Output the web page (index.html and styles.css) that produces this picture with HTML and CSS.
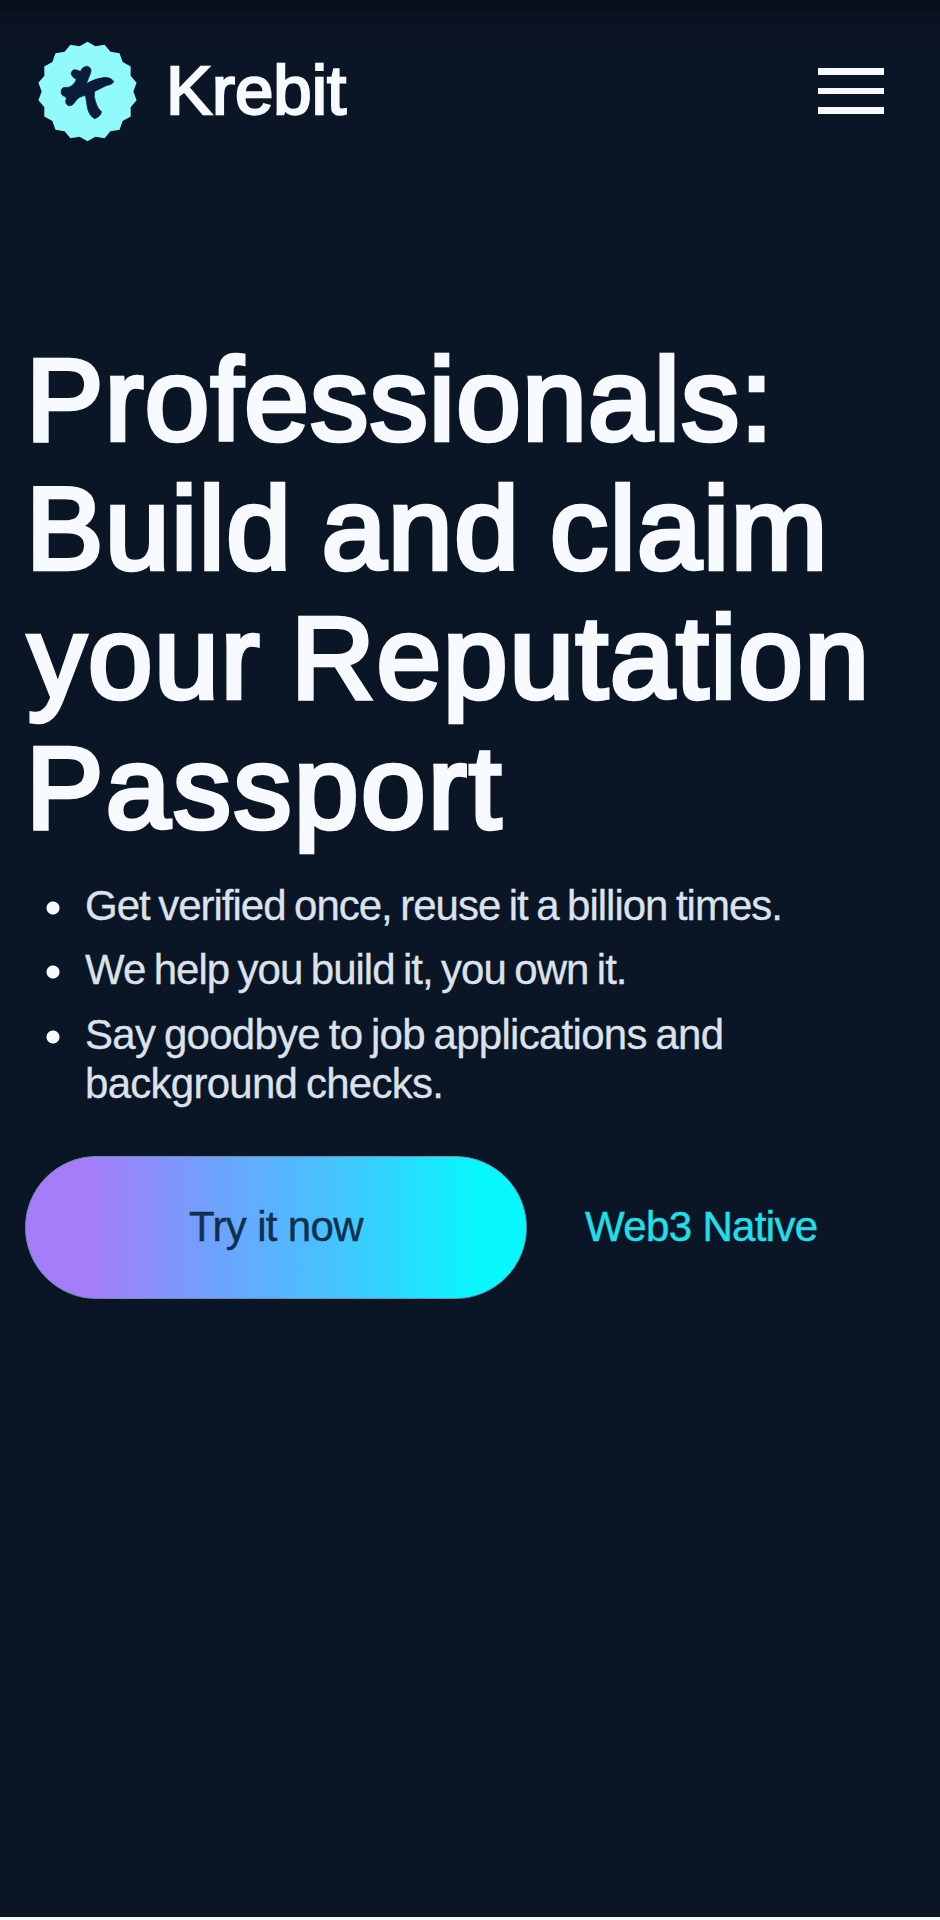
FILE: index.html
```html
<!DOCTYPE html>
<html lang="en">
<head>
<meta charset="utf-8">
<title>Krebit</title>
<link rel="stylesheet" href="styles.css">
</head>
<body>
<div class="page">
  <header class="header">
    <a class="brand">
      <svg class="brand-mark" viewBox="-50 -50 100 100" aria-hidden="true">
        <path class="badge" d="M0-49.2 7.8-44.8 16.9-46.4 22.7-39.4 31.7-37.8 34.8-29.2 42.8-24.7 42.7-15.5 48.6-8.6 45.4 0 48.6 8.6 42.7 15.5 42.8 24.7 34.8 29.2 31.7 37.8 22.7 39.4 16.9 46.4 7.8 44.8 0 49.2-7.8 44.8-16.9 46.4-22.7 39.4-31.7 37.8-34.8 29.2-42.8 24.7-42.7 15.5-48.6 8.6-45.4 0-48.6-8.6-42.7-15.5-42.8-24.7-34.8-29.2-31.7-37.8-22.7-39.4-16.9-46.4-7.8-44.8Z"/>
        <path class="rune" d="M-16-19Q-14-23-10-21L-7-20Q-5-25 0-25Q5-23 3-18L-1-8Q8-13 17-14Q23-14 26-10Q25-7 19-6L7 0Q6 5 8 10Q10 17 14 20Q13 25 7 27Q2 24 0 17L-2 4Q-9 5-12 10Q-15 15-19 14Q-23 12-21 7L-22 5Q-27 4-26-1Q-25-5-20-4Q-14-5-11-12Q-17-15-16-19Z"/>
      </svg>
      <span class="brand-name">Krebit</span>
    </a>
    <div class="menu" role="button" aria-label="Menu"><i></i><i></i><i></i></div>
  </header>
  <main class="hero">
    <h1 class="title">
      <span class="line">Professionals:</span>
      <span class="line line-loose">Build and claim</span>
      <span class="line line-hang">your Reputation</span>
      <span class="line line-short">Passport</span>
    </h1>
    <ul class="points">
      <li>Get verified once, reuse it a billion times.</li>
      <li>We help you build it, you own it.</li>
      <li class="wide">Say goodbye to job applications and<br>background checks.</li>
    </ul>
    <div class="actions">
      <a class="button">Try it now</a>
      <a class="link">Web3 Native</a>
    </div>
  </main>
</div>
</body>
</html>
```
FILE: styles.css
```css
* { box-sizing: border-box; }
body {
  margin: 0;
  background: #f4f9fb;
  font-family: "Liberation Sans", Arial, sans-serif;
  color: #f7faff;
}
.page {
  height: 1917px;
  overflow: hidden;
  background: linear-gradient(#070c18 0, #0b1323 24px, #0a1525 60px, #0a1525 100%);
}
.header {
  display: flex;
  justify-content: space-between;
  align-items: center;
  height: 182px;
  padding: 0 56px 0 37px;
}
.brand { display: flex; align-items: center; gap: 28px; }
.brand-mark { width: 101px; height: 101px; }
.badge { fill: #91fafa; }
.rune { fill: #0b1c38; stroke: #0b1c38; stroke-width: 0.6; }
.brand-name {
  font-size: 69px;
  line-height: 80px;
  letter-spacing: 0;
  -webkit-text-stroke: 2.4px #f7faff;
}
.menu { display: flex; flex-direction: column; gap: 13px; width: 66px; }
.menu i { height: 6.5px; background: #f7faff; }
.hero { padding: 153.8px 25px 0 23px; }
.title {
  margin: 0;
  padding-left: 3px;
  font-size: 116px;
  font-weight: 400;
  line-height: 129.3px;
  letter-spacing: 1.4px;
  word-spacing: -4.5px;
  white-space: nowrap;
  -webkit-text-stroke: 4.6px #f7faff;
}
.line { display: block; }
.line-loose { letter-spacing: 1.7px; }
.line-hang { padding-left: 2px; letter-spacing: 1.9px; }
.line-short { letter-spacing: 2.5px; }
.points {
  margin: 28px 0 0;
  padding: 0;
  list-style: none;
  display: flex;
  flex-direction: column;
  gap: 15px;
  font-size: 42px;
  line-height: 49.5px;
  letter-spacing: -1px;
  word-spacing: -2.2px;
  color: #dce2ec;
  -webkit-text-stroke: 0.3px #dce2ec;
}
.points li { display: flow-root; padding-left: 62px; background: radial-gradient(circle at 30px 27px, #f7faff 6px, transparent 7px); }
.points .wide { letter-spacing: -0.73px; }
.actions { display: flex; align-items: center; gap: 58px; margin: 47px 0 0 2px; font-size: 42px; letter-spacing: -0.65px; }
.button {
  display: flex;
  align-items: center;
  justify-content: center;
  width: 502px;
  height: 143px;
  border: 1px solid #6d8fb0;
  border-radius: 72px;
  background: linear-gradient(90deg, #a57cfa 0, #a57cfa 13%, #6fa1fd 37%, #48c1fd 60%, #27ddff 76%, #06f8fc 91%) border-box;
  color: #11304d;
  -webkit-text-stroke: 0.4px #11304d;
}
.link { color: #21dfe8; -webkit-text-stroke: 0.5px #21dfe8; }
```
